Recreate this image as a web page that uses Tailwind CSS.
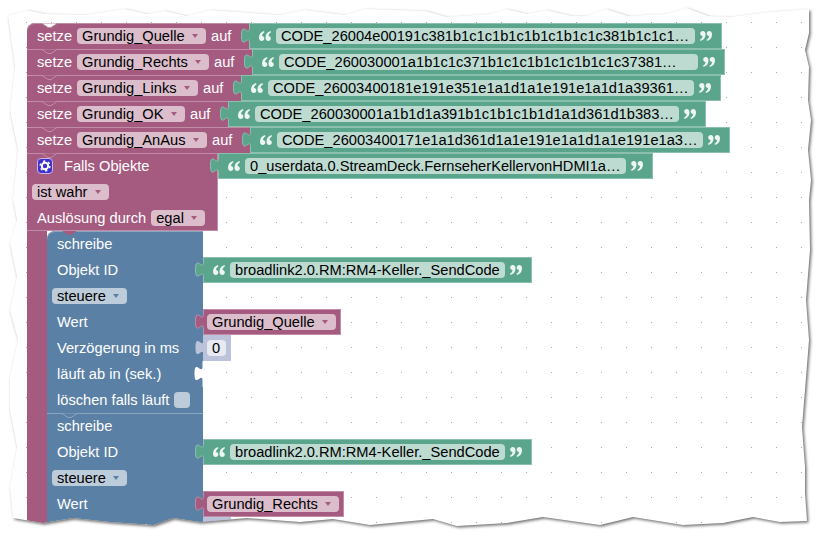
<!DOCTYPE html>
<html lang="en">
  <head>
    <meta charset="UTF-8" />
    <title>Blockly Skript</title>
    <script src="https://cdn.jsdelivr.net/npm/@tailwindcss/browser@4"></script>
  </head>
  <body class="bg-white">
    <!-- shared icons -->
    <svg class="hidden">
      <symbol id="qo" viewBox="0 0 12 10"><path fill="currentColor" d="M5 0C2 1 0 3 0 6.500 0 8.500 1 10 2.700 10 4.200 10 5.300 8.900 5.300 7.500 5.300 6.100 4.300 5.100 3 5.100 3 3.500 4 2.200 5.500 1.300zM11.500 0C8.500 1 6.500 3 6.500 6.500 6.500 8.500 7.500 10 9.200 10 10.700 10 11.800 8.900 11.800 7.500 11.800 6.100 10.800 5.100 9.500 5.100 9.500 3.500 10.500 2.200 12 1.300z"/></symbol>
      <symbol id="qc" viewBox="0 0 12 10"><path fill="currentColor" d="M7 10C10 9 12 7 12 3.500 12 1.500 11 0 9.300 0 7.800 0 6.700 1.100 6.700 2.500 6.700 3.900 7.700 4.900 9 4.900 9 6.500 8 7.800 6.500 8.700zM.5 10C3.500 9 5.500 7 5.500 3.500 5.500 1.500 4.500 0 2.800 0 1.300 0 .2 1.100.2 2.500.2 3.900 1.200 4.900 2.500 4.900 2.500 6.500 1.500 7.800 0 8.700z"/></symbol>
      <symbol id="tab" viewBox="0 0 9 26"><path fill="currentColor" d="M8.500 0V5c0 10-8-8-8 7.500s8-2.500 8 7.500V26h1V0z"/></symbol>
      <symbol id="notch" viewBox="0 0 17 6"><path d="M0 .5h1l6 4h3l6-4h1" fill="currentColor" stroke="#c08ca6"/></symbol>
    </svg>

    <div class="relative w-[826px] h-[539px] overflow-hidden font-['Liberation_Sans',Arial,sans-serif] text-[14.67px] leading-[26px] bg-white bg-[radial-gradient(circle,#a8a8a8_0.6px,transparent_0.9px)] bg-[size:25px_25px] bg-[position:14px_10px]">
      <div class="pt-[23px] pl-[27px] flex flex-col">

        <!-- setze Grundig_Quelle -->
        <div class="flex h-[26px]">
          <div class="relative w-[222px] shrink-0 bg-[#a55b80] text-white pl-[10px] flex items-center rounded-tl-[8px] shadow-[inset_0_1px_0_#c08ca6]">
            <svg class="absolute left-[14px] top-0 text-white" width="17" height="6"><use href="#notch"/></svg>
            <span>setze</span>
            <span class="ml-[5px] w-[129px] h-[16px] rounded-[4px] bg-[#dbbdcc] text-black flex items-center justify-between pl-[5px] pr-[8px] leading-[16px]">Grundig_Quelle<i class="w-0 h-0 border-x-[3px] border-x-transparent border-t-[4px] border-t-[#a55b80]"></i></span>
            <span class="ml-[5px]">auf</span>
          </div>
          <div class="relative shrink-0 bg-[#5ba58c] border-y border-r border-[#8cc0ae] flex items-center pl-[10px] pr-[9px] text-[#eef6f3]">
            <svg class="absolute left-[-8px] top-[-1px] text-[#5ba58c] stroke-[#8cc0ae]" width="9" height="26"><use href="#tab"/></svg>
            <svg width="12" height="10"><use href="#qo"/></svg>
            <span class="mx-[5px] w-[419px] h-[16px] rounded-[4px] bg-[#bddbd1] text-black pl-[5px] leading-[16px] whitespace-nowrap">CODE_26004e00191c381b1c1c1b1c1b1c1b1c1c381b1c1c1…</span>
            <svg width="12" height="10"><use href="#qc"/></svg>
          </div>
        </div>

        <!-- setze Grundig_Rechts -->
        <div class="flex h-[26px]">
          <div class="relative w-[225px] shrink-0 bg-[#a55b80] text-white pl-[10px] flex items-center shadow-[inset_0_1px_0_#c08ca6]">
            <svg class="absolute left-[14px] top-0 text-[#a55b80]" width="17" height="6"><use href="#notch"/></svg>
            <span>setze</span>
            <span class="ml-[5px] w-[132px] h-[16px] rounded-[4px] bg-[#dbbdcc] text-black flex items-center justify-between pl-[5px] pr-[8px] leading-[16px]">Grundig_Rechts<i class="w-0 h-0 border-x-[3px] border-x-transparent border-t-[4px] border-t-[#a55b80]"></i></span>
            <span class="ml-[5px]">auf</span>
          </div>
          <div class="relative shrink-0 bg-[#5ba58c] border-y border-r border-[#8cc0ae] flex items-center pl-[10px] pr-[9px] text-[#eef6f3]">
            <svg class="absolute left-[-8px] top-[-1px] text-[#5ba58c] stroke-[#8cc0ae]" width="9" height="26"><use href="#tab"/></svg>
            <svg width="12" height="10"><use href="#qo"/></svg>
            <span class="mx-[5px] w-[419px] h-[16px] rounded-[4px] bg-[#bddbd1] text-black pl-[5px] leading-[16px] whitespace-nowrap">CODE_260030001a1b1c1c371b1c1c1b1c1c1b1c1c37381…</span>
            <svg width="12" height="10"><use href="#qc"/></svg>
          </div>
        </div>

        <!-- setze Grundig_Links -->
        <div class="flex h-[26px]">
          <div class="relative w-[214px] shrink-0 bg-[#a55b80] text-white pl-[10px] flex items-center shadow-[inset_0_1px_0_#c08ca6]">
            <svg class="absolute left-[14px] top-0 text-[#a55b80]" width="17" height="6"><use href="#notch"/></svg>
            <span>setze</span>
            <span class="ml-[5px] w-[121px] h-[16px] rounded-[4px] bg-[#dbbdcc] text-black flex items-center justify-between pl-[5px] pr-[8px] leading-[16px]">Grundig_Links<i class="w-0 h-0 border-x-[3px] border-x-transparent border-t-[4px] border-t-[#a55b80]"></i></span>
            <span class="ml-[5px]">auf</span>
          </div>
          <div class="relative shrink-0 bg-[#5ba58c] border-y border-r border-[#8cc0ae] flex items-center pl-[10px] pr-[9px] text-[#eef6f3]">
            <svg class="absolute left-[-8px] top-[-1px] text-[#5ba58c] stroke-[#8cc0ae]" width="9" height="26"><use href="#tab"/></svg>
            <svg width="12" height="10"><use href="#qo"/></svg>
            <span class="mx-[5px] w-[426px] h-[16px] rounded-[4px] bg-[#bddbd1] text-black pl-[5px] leading-[16px] whitespace-nowrap">CODE_26003400181e191e351e1a1d1a1e191e1a1d1a39361…</span>
            <svg width="12" height="10"><use href="#qc"/></svg>
          </div>
        </div>

        <!-- setze Grundig_OK -->
        <div class="flex h-[26px]">
          <div class="relative w-[201px] shrink-0 bg-[#a55b80] text-white pl-[10px] flex items-center shadow-[inset_0_1px_0_#c08ca6]">
            <svg class="absolute left-[14px] top-0 text-[#a55b80]" width="17" height="6"><use href="#notch"/></svg>
            <span>setze</span>
            <span class="ml-[5px] w-[108px] h-[16px] rounded-[4px] bg-[#dbbdcc] text-black flex items-center justify-between pl-[5px] pr-[8px] leading-[16px]">Grundig_OK<i class="w-0 h-0 border-x-[3px] border-x-transparent border-t-[4px] border-t-[#a55b80]"></i></span>
            <span class="ml-[5px]">auf</span>
          </div>
          <div class="relative shrink-0 bg-[#5ba58c] border-y border-r border-[#8cc0ae] flex items-center pl-[10px] pr-[9px] text-[#eef6f3]">
            <svg class="absolute left-[-8px] top-[-1px] text-[#5ba58c] stroke-[#8cc0ae]" width="9" height="26"><use href="#tab"/></svg>
            <svg width="12" height="10"><use href="#qo"/></svg>
            <span class="mx-[5px] w-[424px] h-[16px] rounded-[4px] bg-[#bddbd1] text-black pl-[5px] leading-[16px] whitespace-nowrap">CODE_260030001a1b1d1a391b1c1b1c1b1d1a1d361d1b383…</span>
            <svg width="12" height="10"><use href="#qc"/></svg>
          </div>
        </div>

        <!-- setze Grundig_AnAus -->
        <div class="flex h-[26px]">
          <div class="relative w-[223px] shrink-0 bg-[#a55b80] text-white pl-[10px] flex items-center shadow-[inset_0_1px_0_#c08ca6]">
            <svg class="absolute left-[14px] top-0 text-[#a55b80]" width="17" height="6"><use href="#notch"/></svg>
            <span>setze</span>
            <span class="ml-[5px] w-[130px] h-[16px] rounded-[4px] bg-[#dbbdcc] text-black flex items-center justify-between pl-[5px] pr-[8px] leading-[16px]">Grundig_AnAus<i class="w-0 h-0 border-x-[3px] border-x-transparent border-t-[4px] border-t-[#a55b80]"></i></span>
            <span class="ml-[5px]">auf</span>
          </div>
          <div class="relative shrink-0 bg-[#5ba58c] border-y border-r border-[#8cc0ae] flex items-center pl-[10px] pr-[9px] text-[#eef6f3]">
            <svg class="absolute left-[-8px] top-[-1px] text-[#5ba58c] stroke-[#8cc0ae]" width="9" height="26"><use href="#tab"/></svg>
            <svg width="12" height="10"><use href="#qo"/></svg>
            <span class="mx-[5px] w-[426px] h-[16px] rounded-[4px] bg-[#bddbd1] text-black pl-[5px] leading-[16px] whitespace-nowrap">CODE_26003400171e1a1d361d1a1e191e1a1d1a1e191e1a3…</span>
            <svg width="12" height="10"><use href="#qc"/></svg>
          </div>
        </div>

        <!-- Falls Objekte header -->
        <div class="flex items-start">
          <div class="relative w-[191px] shrink-0 bg-[#a55b80] text-white shadow-[inset_0_1px_0_#c08ca6,inset_-1px_0_0_#c08ca6,inset_0_-1px_0_#c08ca6] flex flex-col">
            <svg class="absolute left-[14px] top-0 text-[#a55b80]" width="17" height="6"><use href="#notch"/></svg>
            <div class="h-[26px] flex items-center pl-[10px]">
              <svg width="16" height="16" viewBox="0 0 16 16">
                <rect x=".5" y=".5" width="15" height="15" rx="3.500" fill="#3d2fd0" stroke="#c9b8e0"/>
                <circle cx="8" cy="8" r="3.200" fill="none" stroke="#fff" stroke-width="2"/>
                <circle cx="8" cy="8" r="4.900" fill="none" stroke="#fff" stroke-width="1.500" stroke-dasharray="2.200 2.930"/>
              </svg>
              <span class="ml-[11px]">Falls Objekte</span>
            </div>
            <div class="h-[26px] flex items-center pl-[5px]">
              <span class="w-[77px] h-[16px] rounded-[4px] bg-[#dbbdcc] text-black flex items-center justify-between pl-[5px] pr-[8px] leading-[16px]">ist wahr<i class="w-0 h-0 border-x-[3px] border-x-transparent border-t-[4px] border-t-[#a55b80]"></i></span>
            </div>
            <div class="h-[26px] flex items-center pl-[10px]">
              <span>Auslösung durch</span>
              <span class="ml-[5px] w-[54px] h-[16px] rounded-[4px] bg-[#dbbdcc] text-black flex items-center justify-between pl-[5px] pr-[8px] leading-[16px]">egal<i class="w-0 h-0 border-x-[3px] border-x-transparent border-t-[4px] border-t-[#a55b80]"></i></span>
            </div>
          </div>
          <div class="relative shrink-0 h-[26px] bg-[#5ba58c] border-y border-r border-[#8cc0ae] flex items-center pl-[10px] pr-[9px] text-[#eef6f3]">
            <svg class="absolute left-[-8px] top-[-1px] text-[#5ba58c] stroke-[#8cc0ae]" width="9" height="26"><use href="#tab"/></svg>
            <svg width="12" height="10"><use href="#qo"/></svg>
            <span class="mx-[5px] w-[381px] h-[16px] rounded-[4px] bg-[#bddbd1] text-black pl-[5px] leading-[16px] whitespace-nowrap">0_userdata.0.StreamDeck.FernseherKellervonHDMI1a…</span>
            <svg width="12" height="10"><use href="#qc"/></svg>
          </div>
        </div>

        <!-- Falls Objekte body -->
        <div class="flex">
          <div class="w-[20px] shrink-0 bg-[#a55b80]"></div>
          <div class="flex flex-col text-white">

            <!-- schreibe 1 -->
            <div class="relative w-[156px] h-[26px] bg-[#5b80a5] pl-[10px] flex items-center rounded-tl-[8px] shadow-[inset_0_1px_0_#8ca6c0]">
              <svg class="absolute left-[15px] top-0" width="15" height="5"><path d="M0 0l6 4h3l6-4z" fill="#a55b80"/></svg>
              schreibe
            </div>
            <div class="flex h-[26px]">
              <div class="w-[156px] shrink-0 bg-[#5b80a5] pl-[10px] flex items-center">Objekt ID</div>
              <div class="relative shrink-0 bg-[#5ba58c] border-y border-r border-[#8cc0ae] flex items-center pl-[10px] pr-[9px] text-[#eef6f3]">
                <svg class="absolute left-[-8px] top-[-1px] text-[#5ba58c] stroke-[#8cc0ae]" width="9" height="26"><use href="#tab"/></svg>
                <svg width="12" height="10"><use href="#qo"/></svg>
                <span class="mx-[5px] w-[275px] h-[16px] rounded-[4px] bg-[#bddbd1] text-black pl-[5px] leading-[16px] whitespace-nowrap">broadlink2.0.RM:RM4-Keller._SendCode</span>
                <svg width="12" height="10"><use href="#qc"/></svg>
              </div>
            </div>
            <div class="w-[156px] h-[26px] bg-[#5b80a5] pl-[5px] flex items-center">
              <span class="w-[75px] h-[16px] rounded-[4px] bg-[#bdccdb] text-black flex items-center justify-between pl-[5px] pr-[8px] leading-[16px]">steuere<i class="w-0 h-0 border-x-[3px] border-x-transparent border-t-[4px] border-t-[#5b80a5]"></i></span>
            </div>
            <div class="flex h-[26px]">
              <div class="w-[156px] shrink-0 bg-[#5b80a5] pl-[10px] flex items-center">Wert</div>
              <div class="relative shrink-0 bg-[#a55b80] border-y border-r border-[#c08ca6] flex items-center pl-[4px] pr-[4px]">
                <svg class="absolute left-[-8px] top-[-1px] text-[#a55b80] stroke-[#c08ca6]" width="9" height="26"><use href="#tab"/></svg>
                <span class="w-[129px] h-[16px] rounded-[4px] bg-[#dbbdcc] text-black flex items-center justify-between pl-[5px] pr-[8px] leading-[16px]">Grundig_Quelle<i class="w-0 h-0 border-x-[3px] border-x-transparent border-t-[4px] border-t-[#a55b80]"></i></span>
              </div>
            </div>
            <div class="flex h-[26px]">
              <div class="w-[156px] shrink-0 bg-[#5b80a5] pl-[10px] flex items-center">Verzögerung in ms</div>
              <div class="relative shrink-0 bg-[#bdc2db] flex items-center pl-[4px] pr-[5px]">
                <svg class="absolute left-[-8px] top-0 text-[#bdc2db]" width="9" height="26"><use href="#tab"/></svg>
                <span class="w-[19px] h-[16px] rounded-[4px] bg-[#e8eaf3] text-black pl-[5px] leading-[16px]">0</span>
              </div>
            </div>
            <div class="relative w-[156px] h-[26px] bg-[#5b80a5] pl-[10px] flex items-center">
              läuft ab in (sek.)
              <svg class="absolute right-0 top-0 text-white" width="9" height="26"><use href="#tab"/></svg>
            </div>
            <div class="w-[156px] h-[26px] bg-[#5b80a5] pl-[10px] flex items-center">
              löschen falls läuft
              <span class="ml-[5px] w-[16px] h-[16px] rounded-[4px] bg-[#bdccdb]"></span>
            </div>

            <!-- schreibe 2 -->
            <div class="relative w-[156px] h-[26px] bg-[#5b80a5] pl-[10px] flex items-center shadow-[inset_0_1px_0_#8ca6c0]">
              <svg class="absolute left-[14px] top-0" width="17" height="6"><path d="M0 .5h1l6 4h3l6-4h1" fill="#5b80a5" stroke="#8ca6c0"/></svg>
              schreibe
            </div>
            <div class="flex h-[26px]">
              <div class="w-[156px] shrink-0 bg-[#5b80a5] pl-[10px] flex items-center">Objekt ID</div>
              <div class="relative shrink-0 bg-[#5ba58c] border-y border-r border-[#8cc0ae] flex items-center pl-[10px] pr-[9px] text-[#eef6f3]">
                <svg class="absolute left-[-8px] top-[-1px] text-[#5ba58c] stroke-[#8cc0ae]" width="9" height="26"><use href="#tab"/></svg>
                <svg width="12" height="10"><use href="#qo"/></svg>
                <span class="mx-[5px] w-[275px] h-[16px] rounded-[4px] bg-[#bddbd1] text-black pl-[5px] leading-[16px] whitespace-nowrap">broadlink2.0.RM:RM4-Keller._SendCode</span>
                <svg width="12" height="10"><use href="#qc"/></svg>
              </div>
            </div>
            <div class="w-[156px] h-[26px] bg-[#5b80a5] pl-[5px] flex items-center">
              <span class="w-[75px] h-[16px] rounded-[4px] bg-[#bdccdb] text-black flex items-center justify-between pl-[5px] pr-[8px] leading-[16px]">steuere<i class="w-0 h-0 border-x-[3px] border-x-transparent border-t-[4px] border-t-[#5b80a5]"></i></span>
            </div>
            <div class="flex h-[26px]">
              <div class="w-[156px] shrink-0 bg-[#5b80a5] pl-[10px] flex items-center">Wert</div>
              <div class="relative shrink-0 bg-[#a55b80] border-y border-r border-[#c08ca6] flex items-center pl-[4px] pr-[4px]">
                <svg class="absolute left-[-8px] top-[-1px] text-[#a55b80] stroke-[#c08ca6]" width="9" height="26"><use href="#tab"/></svg>
                <span class="w-[132px] h-[16px] rounded-[4px] bg-[#dbbdcc] text-black flex items-center justify-between pl-[5px] pr-[8px] leading-[16px]">Grundig_Rechts<i class="w-0 h-0 border-x-[3px] border-x-transparent border-t-[4px] border-t-[#a55b80]"></i></span>
              </div>
            </div>
            <div class="flex h-[26px]">
              <div class="w-[156px] shrink-0 bg-[#5b80a5] pl-[10px] flex items-center">Verzögerung in ms</div>
              <div class="relative shrink-0 bg-[#bdc2db] flex items-center pl-[4px] pr-[5px]">
                <svg class="absolute left-[-8px] top-0 text-[#bdc2db]" width="9" height="26"><use href="#tab"/></svg>
                <span class="w-[19px] h-[16px] rounded-[4px] bg-[#e8eaf3] text-black pl-[5px] leading-[16px]">0</span>
              </div>
            </div>
          </div>
        </div>
      </div>

      <!-- torn paper edge: covers everything outside the sheet -->
      <svg class="absolute inset-0 pointer-events-none" width="826" height="539" viewBox="0 0 826 539">
        <defs>
          <filter id="soft" x="-5%" y="-5%" width="110%" height="110%"><feGaussianBlur stdDeviation="1.500"/></filter>
          <path id="sheet" d="M8 16L27 10L45 14L85 15L125 9L147 14L165 11L187 16L210 10L280 15L305 10L345 15L365 9L425 11L447 17L490 14L506 9L527 14L546 10L572 16L586 16L606 9L628 16L665 14L687 8L708 16L730 17L770 12L809 9L809 33L805 50L809 67L808 100L811 120L808 150L811 180L809 200L810 250L806 300L809 340L805 390L802 427L805 467L805 493L807 521L780 522L753 517L723 523L683 525L633 517L600 525L543 517L507 523L457 526L433 519L370 525L333 519L300 522L247 518L200 522L173 518L153 525L110 522L73 518L43 523L13 518L10 487L17 447L10 410L10 377L18 340L10 310L17 277L10 243L17 220L13 200L18 150L10 110L15 67L10 30Z"/>
          <clipPath id="outside"><path clip-rule="evenodd" d="M0 0H826V539H0Z M8 16L27 10L45 14L85 15L125 9L147 14L165 11L187 16L210 10L280 15L305 10L345 15L365 9L425 11L447 17L490 14L506 9L527 14L546 10L572 16L586 16L606 9L628 16L665 14L687 8L708 16L730 17L770 12L809 9L809 33L805 50L809 67L808 100L811 120L808 150L811 180L809 200L810 250L806 300L809 340L805 390L802 427L805 467L805 493L807 521L780 522L753 517L723 523L683 525L633 517L600 525L543 517L507 523L457 526L433 519L370 525L333 519L300 522L247 518L200 522L173 518L153 525L110 522L73 518L43 523L13 518L10 487L17 447L10 410L10 377L18 340L10 310L17 277L10 243L17 220L13 200L18 150L10 110L15 67L10 30Z"/></clipPath>
        </defs>
        <g clip-path="url(#outside)">
          <rect width="826" height="539" fill="#fff"/>
          <use href="#sheet" transform="translate(1.500 1.500)" fill="#6b6b6b" filter="url(#soft)"/>
        </g>
      </svg>
    </div>
  </body>
</html>
